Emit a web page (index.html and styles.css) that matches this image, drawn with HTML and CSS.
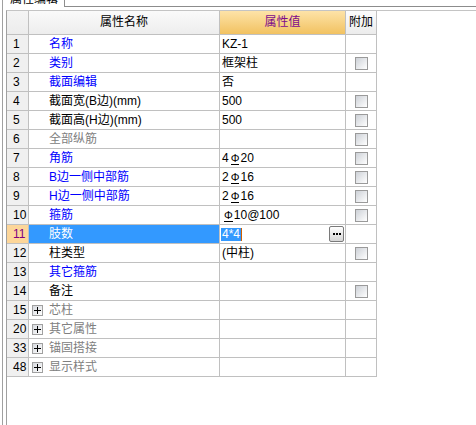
FILE: index.html
```html
<!DOCTYPE html>
<html lang="zh">
<head>
<meta charset="utf-8">
<title>属性编辑</title>
<link rel="stylesheet" href="styles.css">
</head>
<body>
<div class="page">
  <div class="outer">
    <div class="tabrow">
      <div class="tab"><div class="tabtext">属性编辑</div></div>
      <div class="tabfill"></div>
    </div>
    <div class="content">
      <div class="grid">
        <div class="c hnum"></div>
        <div class="c hname">属性名称</div>
        <div class="c hval">属性值</div>
        <div class="c hatt">附加</div>

        <div class="c num">1</div>
        <div class="c name blue">名称</div>
        <div class="c val">KZ-1</div>
        <div class="c att"></div>

        <div class="c num">2</div>
        <div class="c name blue">类别</div>
        <div class="c val">框架柱</div>
        <div class="c att"><span class="cb"></span></div>

        <div class="c num">3</div>
        <div class="c name blue">截面编辑</div>
        <div class="c val">否</div>
        <div class="c att"></div>

        <div class="c num">4</div>
        <div class="c name">截面宽(B边)(mm)</div>
        <div class="c val">500</div>
        <div class="c att"><span class="cb"></span></div>

        <div class="c num">5</div>
        <div class="c name">截面高(H边)(mm)</div>
        <div class="c val">500</div>
        <div class="c att"><span class="cb"></span></div>

        <div class="c num">6</div>
        <div class="c name gray">全部纵筋</div>
        <div class="c val"></div>
        <div class="c att"><span class="cb"></span></div>

        <div class="c num">7</div>
        <div class="c name blue">角筋</div>
        <div class="c val">4<span class="rb">Φ</span>20</div>
        <div class="c att"><span class="cb"></span></div>

        <div class="c num">8</div>
        <div class="c name blue">B边一侧中部筋</div>
        <div class="c val">2<span class="rb">Φ</span>16</div>
        <div class="c att"><span class="cb"></span></div>

        <div class="c num">9</div>
        <div class="c name blue">H边一侧中部筋</div>
        <div class="c val">2<span class="rb">Φ</span>16</div>
        <div class="c att"><span class="cb"></span></div>

        <div class="c num">10</div>
        <div class="c name blue">箍筋</div>
        <div class="c val"><span class="rb first">Φ</span>10@100</div>
        <div class="c att"><span class="cb"></span></div>

        <div class="c num numsel">11</div>
        <div class="c name sel">肢数</div>
        <div class="c val edit"><span class="hl">4*4</span><span class="caret"></span><span class="dots"><i></i><i></i><i></i></span></div>
        <div class="c att"></div>

        <div class="c num">12</div>
        <div class="c name">柱类型</div>
        <div class="c val">(中柱)</div>
        <div class="c att"><span class="cb"></span></div>

        <div class="c num">13</div>
        <div class="c name blue">其它箍筋</div>
        <div class="c val"></div>
        <div class="c att"></div>

        <div class="c num">14</div>
        <div class="c name">备注</div>
        <div class="c val"></div>
        <div class="c att"><span class="cb"></span></div>

        <div class="c num">15</div>
        <div class="c name group"><span class="plus"></span>芯柱</div>
        <div class="c val"></div>
        <div class="c att"></div>

        <div class="c num">20</div>
        <div class="c name group"><span class="plus"></span>其它属性</div>
        <div class="c val"></div>
        <div class="c att"></div>

        <div class="c num">33</div>
        <div class="c name group"><span class="plus"></span>锚固搭接</div>
        <div class="c val"></div>
        <div class="c att"></div>

        <div class="c num">48</div>
        <div class="c name group"><span class="plus"></span>显示样式</div>
        <div class="c val"></div>
        <div class="c att"></div>
      </div>
    </div>
  </div>
</div>
</body>
</html>
```
FILE: styles.css
```css
html, body {
  margin: 0;
  padding: 0;
  background: #ffffff;
}
.page {
  width: 476px;
  height: 425px;
  overflow: hidden;
  font-family: "Liberation Sans", "Noto Sans CJK SC", sans-serif;
  font-size: 12px;
  color: #000;
}
.outer {
  margin-left: 2px;
  border-left: 1px solid #a0a0a0;
  height: 425px;
}
.tabrow {
  display: flex;
  height: 7px;
}
.tab {
  width: 61px;
  height: 7px;
  border-right: 1px solid #8e8e8e;
  overflow: hidden;
}
.tabtext {
  margin-top: -8px;
  padding-left: 7px;
  line-height: 12px;
  font-family: "Noto Sans CJK SC", sans-serif;
}
.tabfill {
  flex: 1;
  height: 6px;
  border-bottom: 1px solid #8c8c8c;
}
.content {
  margin: 3px 0 0 3px;
  border-left: 1px solid #a0a0a0;
  border-top: 1px solid #c4c4c4;
  height: 420px;
}
.grid {
  display: grid;
  grid-template-columns: 21px 190px 125px 30px;
  grid-template-rows: 23px repeat(18, 18px);
  gap: 1px;
  background: #c0c0c0;
  padding: 0 1px 1px 0;
  width: max-content;
}
.c {
  background: #ffffff;
  line-height: 18px;
  white-space: nowrap;
  overflow: hidden;
}
.hnum {
  background: linear-gradient(#f4f4f4, #ececec);
}
.hname {
  line-height: 23px;
  text-align: center;
  background: linear-gradient(#fafafa, #ededed);
}
.hval {
  line-height: 23px;
  text-align: center;
  color: #7d0a8c;
  background: linear-gradient(#fde3a8, #f2c261);
}
.hatt {
  line-height: 23px;
  text-align: center;
  background: linear-gradient(#fcfcfc, #ececec);
}
.num {
  background: #f0f0f0;
  padding-left: 6px;
}
.numsel {
  background: #fdd699;
  color: #800080;
}
.name {
  padding-left: 20px;
}
.blue {
  color: #0000ff;
}
.gray {
  color: #808080;
}
.sel {
  background: #3399ff;
  color: #ffffff;
}
.group {
  padding-left: 3px;
  display: flex;
  align-items: center;
  gap: 6px;
  color: #808080;
}
.plus {
  position: relative;
  width: 9px;
  height: 9px;
  border: 1px solid #a0a0a0;
  background: linear-gradient(135deg, #d6d9de, #ffffff);
}
.plus::before,
.plus::after {
  content: "";
  position: absolute;
  background: #000;
}
.plus::before {
  left: 1px;
  top: 4px;
  width: 7px;
  height: 1px;
}
.plus::after {
  left: 4px;
  top: 1px;
  width: 1px;
  height: 7px;
}
.val {
  padding-left: 2px;
}
.rb {
  display: inline-block;
  line-height: 11px;
  border-bottom: 1px solid #000;
  margin: 0 1px 0 2px;
  font-size: 11px;
}
.rb.first {
  margin-left: 2px;
}
.edit {
  display: flex;
  align-items: center;
  padding-left: 1px;
}
.hl {
  background: #3399ff;
  color: #fff;
  line-height: 13px;
  padding: 0 1px;
}
.caret {
  width: 1px;
  height: 13px;
  background: #d06000;
}
.dots {
  margin-left: auto;
  margin-right: 1px;
  width: 13px;
  height: 14px;
  border: 1px solid #7a7a7a;
  border-radius: 2px;
  background: linear-gradient(#ffffff, #d6d6d6);
  display: flex;
  align-items: center;
  justify-content: center;
  gap: 1px;
}
.dots i {
  width: 2px;
  height: 2px;
  background: #000;
}
.att {
  padding: 3px 0 0 9px;
}
.cb {
  display: block;
  width: 11px;
  height: 11px;
  border: 1px solid #9a9a9a;
  background: linear-gradient(135deg, #cdd1d7, #ffffff);
}
```
